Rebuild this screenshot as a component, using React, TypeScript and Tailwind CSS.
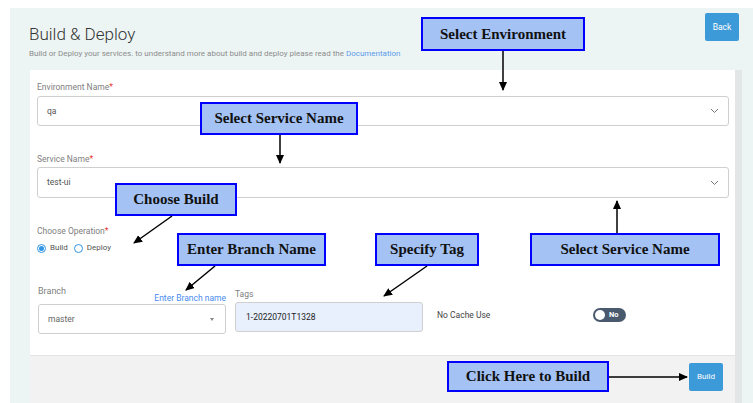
import React from "react";

type Note = { text: string; box: string };

const notes: Note[] = [
  { text: "Select Environment", box: "left-[421px] top-[17px] w-[164px] h-[34px]" },
  { text: "Select Service Name", box: "left-[200px] top-[102px] w-[158px] h-[33px]" },
  { text: "Choose Build", box: "left-[115px] top-[183px] w-[122px] h-[33px]" },
  { text: "Enter Branch Name", box: "left-[177px] top-[233px] w-[149px] h-[33px]" },
  { text: "Specify Tag", box: "left-[375px] top-[233px] w-[104px] h-[33px]" },
  { text: "Select Service Name", box: "left-[530px] top-[233px] w-[190px] h-[33px]" },
  { text: "Click Here to Build", box: "left-[447px] top-[361px] w-[162px] h-[31px]" },
];

const arrows: [number, number, number, number][] = [
  [503, 51, 503, 90],
  [280, 135, 280, 163],
  [172, 216, 134, 243],
  [215, 266, 186, 290],
  [427, 266, 384, 296],
  [617, 233, 617, 201],
  [609, 377, 687, 377],
];

const Chevron = () => (
  <svg width="9" height="6" viewBox="0 0 9 6" className="shrink-0">
    <polyline points="1,1 4.5,4.5 8,1" fill="none" stroke="#777" strokeWidth="1" />
  </svg>
);

const Label = ({ children, req }: { children: React.ReactNode; req?: boolean }) => (
  <div className="text-[8.5px] leading-[12px] text-[#808080]">
    {children}
    {req && <span className="text-[#e53935]">*</span>}
  </div>
);

export default function App() {
  return (
    <div
      className="relative w-[753px] h-[403px] overflow-hidden bg-white"
      style={{ fontFamily: "Roboto, 'Liberation Sans', sans-serif" }}
    >
      <div className="ml-[10px] mt-[8px] h-[395px] bg-[#edf5f4] pl-[20px] pr-[11px] pt-[5px]">
        {/* header */}
        <div className="flex items-start justify-between">
          <div className="pt-[10px] -ml-px">
            <div className="text-[17px] leading-[22px] font-light text-[#333]">Build &amp; Deploy</div>
            <div className="mt-[3px] text-[8px] leading-[12px] text-[#8c8c8c]">
              Build or Deploy your services. to understand more about build and deploy please read the{" "}
              <span className="text-[#5b9be8]">Documentation</span>
            </div>
          </div>
          <button className="mr-[3px] h-[28px] w-[34px] rounded-[2px] bg-[#3d9ad9] text-[8.5px] text-white">
            Back
          </button>
        </div>

        {/* card */}
        <div className="mt-[10px] border-r-[7px] border-r-[#e2e6e6] bg-white">
          <div className="pl-[7px] pr-[6px] pt-[11px] pb-[21px]">
            <Label req>Environment Name</Label>
            <div className="mt-[3px] flex h-[30px] items-center justify-between rounded-[3px] border border-[#cfcfcf] pl-[9px] pr-[9px] text-[8.5px] text-[#555]">
              <span>qa</span>
              <Chevron />
            </div>

            <div className="mt-[27px]">
              <Label req>Service Name</Label>
            </div>
            <div className="mt-[2px] flex h-[31px] items-center justify-between rounded-[3px] border border-[#cfcfcf] pl-[9px] pr-[9px] text-[8.5px] text-[#555]">
              <span>test-ui</span>
              <Chevron />
            </div>

            <div className="mt-[27px]">
              <Label req>Choose Operation</Label>
            </div>
            <div className="mt-[5px] flex h-[12px] items-center text-[8px] text-[#555]">
              <span className="flex h-[9px] w-[9px] items-center justify-center rounded-full border border-[#2f95e6]">
                <span className="h-[5px] w-[5px] rounded-full bg-[#2f95e6]" />
              </span>
              <span className="ml-[4px]">Build</span>
              <span className="ml-[6px] h-[9px] w-[9px] rounded-full border border-[#2f95e6]" />
              <span className="ml-[4px]">Deploy</span>
            </div>

            <div className="ml-px mt-[31px] flex items-start">
              <div className="w-[188px]">
                <div className="flex h-[19px] justify-between">
                  <span className="text-[9px] leading-[12px] text-[#808080]">Branch</span>
                  <span className="self-end text-[8.5px] leading-[12px] text-[#4a8cf0]">Enter Branch name</span>
                </div>
                <div className="flex h-[30px] items-center justify-between rounded-[3px] border border-[#cfcfcf] pl-[9px] pr-[11px] text-[8.5px] text-[#666]">
                  <span>master</span>
                  <span className="h-0 w-0 border-x-[2.5px] border-t-[3px] border-x-transparent border-t-[#888]" />
                </div>
              </div>
              <div className="ml-[9px] w-[188px] pt-[3px]">
                <Label>Tags</Label>
                <div className="mt-[2px] flex h-[30px] items-center rounded-[3px] border border-[#cfcfcf] bg-[#e8f0fe] pl-[10px] text-[8.5px] text-[#222]">
                  1-20220701T1328
                </div>
              </div>
              <div className="ml-[14px] mt-[23px] flex items-center">
                <span className="w-[156px] text-[8.5px] leading-[12px] text-[#444]">No Cache Use</span>
                <span className="flex h-[14px] w-[33px] items-center rounded-full bg-[#4a5a6e] pl-[2px]">
                  <span className="h-[10px] w-[10px] rounded-full bg-white" />
                  <span className="ml-[4px] text-[7.5px] font-bold text-white">No</span>
                </span>
              </div>
            </div>
          </div>

          {/* footer */}
          <div className="flex h-[60px] justify-end border-t border-[#e4e4e4] bg-[#f2f2f2] pr-[12px] pt-[7px]">
            <button className="h-[28px] w-[34px] rounded-[2px] bg-[#3d9ad9] text-[8px] text-white">Build</button>
          </div>
        </div>
      </div>

      {/* annotations */}
      {notes.map((n) => (
        <div
          key={n.text + n.box}
          className={`absolute ${n.box} flex items-center justify-center border-2 border-[#0000ff] bg-[#a4c2f4] text-[15px] font-bold text-[#111]`}
          style={{ fontFamily: "'Liberation Serif', 'DejaVu Serif', serif" }}
        >
          {n.text}
        </div>
      ))}
      <svg className="pointer-events-none absolute left-0 top-0" width="753" height="403">
        <defs>
          <marker id="ah" markerWidth="9" markerHeight="8" refX="8" refY="4" orient="auto" markerUnits="userSpaceOnUse">
            <polygon points="0,0 9,4 0,8" fill="#000" />
          </marker>
        </defs>
        {arrows.map(([x1, y1, x2, y2], i) => (
          <line key={i} x1={x1} y1={y1} x2={x2} y2={y2} stroke="#000" strokeWidth="1.5" markerEnd="url(#ah)" />
        ))}
      </svg>
    </div>
  );
}
